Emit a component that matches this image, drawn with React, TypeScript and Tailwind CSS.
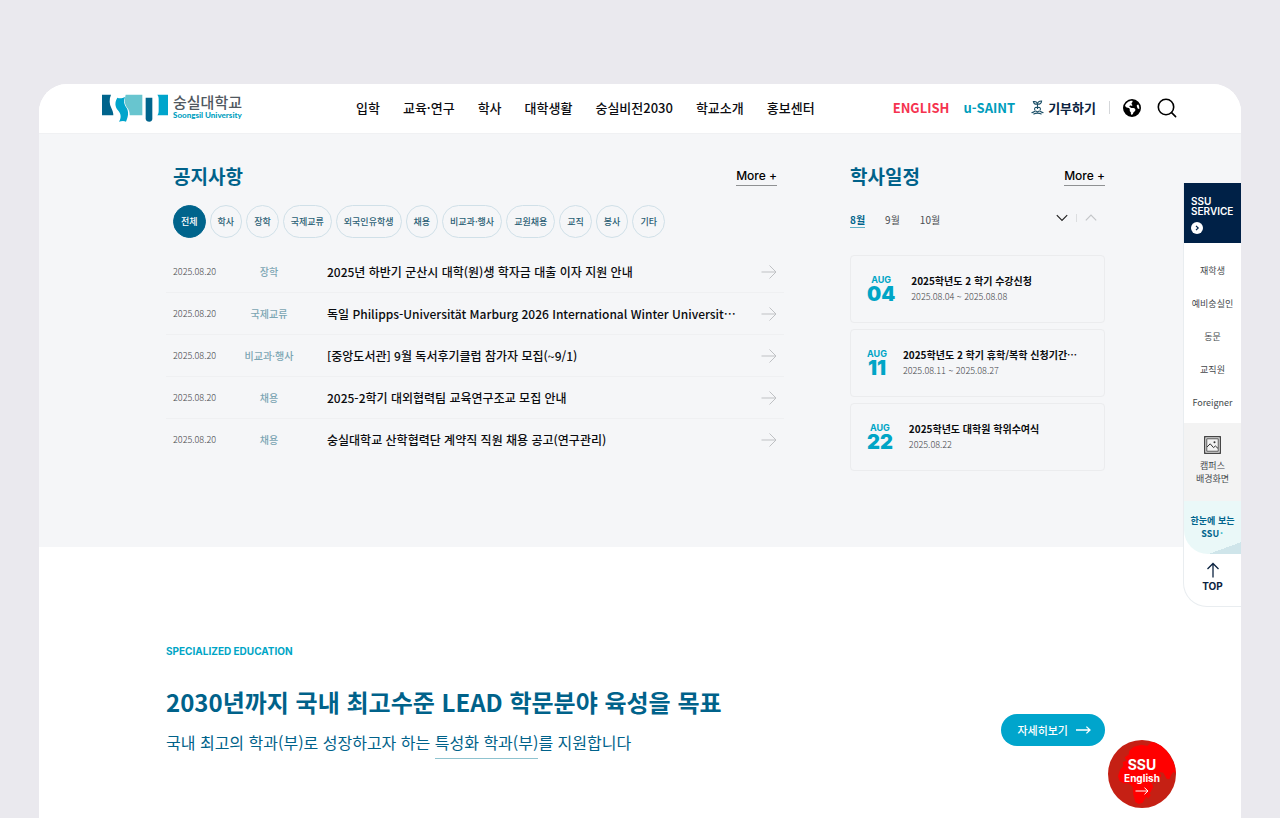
import { useState } from "react";
import { FaEarthAmericas } from "react-icons/fa6";

const NAV = ["입학", "교육·연구", "학사", "대학생활", "숭실비전2030", "학교소개", "홍보센터"];

const CATEGORIES = ["전체", "학사", "장학", "국제교류", "외국인유학생", "채용", "비교과·행사", "교원채용", "교직", "봉사", "기타"];

const NOTICES = [
  { date: "2025.08.20", category: "장학", title: "2025년 하반기 군산시 대학(원)생 학자금 대출 이자 지원 안내" },
  { date: "2025.08.20", category: "국제교류", title: "독일 Philipps-Universität Marburg 2026 International Winter Universit…" },
  { date: "2025.08.20", category: "비교과·행사", title: "[중앙도서관] 9월 독서후기클럽 참가자 모집(~9/1)" },
  { date: "2025.08.20", category: "채용", title: "2025-2학기 대외협력팀 교육연구조교 모집 안내" },
  { date: "2025.08.20", category: "채용", title: "숭실대학교 산학협력단 계약직 직원 채용 공고(연구관리)" },
];

const EVENTS = [
  { month: "AUG", day: "04", title: "2025학년도 2 학기 수강신청", period: "2025.08.04 ~ 2025.08.08" },
  { month: "AUG", day: "11", title: "2025학년도 2 학기 휴학/복학 신청기간…", period: "2025.08.11 ~ 2025.08.27" },
  { month: "AUG", day: "22", title: "2025학년도 대학원 학위수여식", period: "2025.08.22" },
];

const MONTHS = ["8월", "9월", "10월"];

const SERVICES = ["재학생", "예비숭실인", "동문", "교직원", "Foreigner"];

function Arrow({ className }: { className: string }) {
  return (
    <svg viewBox="0 0 16 16" fill="none" stroke="currentColor" className={className} aria-hidden="true">
      <path d="M0.5 8H15M8.5 1.5L15 8L8.5 14.5" />
    </svg>
  );
}

function Logo() {
  return (
    <a href="#" className="flex shrink-0 items-start gap-[5px]">
      <svg viewBox="0 0 198 84" className="h-[28px] w-[66px]" aria-hidden="true">
        <path d="M0 2H27C21 16 22 30 28 42C32 50 34 56 34 64H0Z" fill="#00648c" />
        <path d="M46 11C54 15 62 12 69 9C64 22 66 32 74 42C80 52 80 66 72 83C66 80 58 81 51 83C59 70 57 60 49 50C38 38 38 24 46 11Z" fill="#00a5cc" />
        <path d="M71 2H121V64H83C83 54 81 48 76 42C67 30 67 18 71 2Z" fill="#68c5cf" />
        <path d="M131 11H151V74C151 80 147 83 142 83C136 83 131 79 131 74Z" fill="#00648c" />
        <path d="M166 2H198V64H166C169 60 170 56 170 50V16C170 10 169 6 166 2Z" fill="#00a5cc" />
      </svg>
      <span className="flex w-[70px] flex-col whitespace-nowrap">
        <span className="text-[15px] leading-4 font-medium text-[#505860]">숭실대학교</span>
        <span className="font-['Lato',sans-serif] text-[8px] leading-[10px] font-black text-[#00a0c0]">Soongsil University</span>
      </span>
    </a>
  );
}

function Header() {
  return (
    <header className="flex h-[50px] items-center border-b border-[#f0f1f3] bg-white pr-16 pb-0.5 pl-[63px] text-[13px] leading-5">
      <Logo />
      <nav className="ml-[113px] flex gap-[23px] font-medium text-[#0c0c10]">
        {NAV.map((item) => (
          <a key={item} href="#" className="whitespace-nowrap">{item}</a>
        ))}
      </nav>
      <div className="ml-auto flex items-center font-bold">
        <a href="#" className="text-[#f5334f]">ENGLISH</a>
        <a href="#" className="ml-[14px] whitespace-nowrap text-[#009dbc]">u-SAINT</a>
        <a href="#" className="ml-4 flex items-center gap-1 whitespace-nowrap text-[#0b2340]">
          <svg viewBox="0 0 14 16" fill="none" stroke="#1d5068" strokeWidth="1.2" strokeLinecap="round" className="h-[15px] w-[13px]" aria-hidden="true">
            <path d="M7 9V4.5M7 4.5C4.5 4.8 3 3.5 2.6 1.6C5 1.2 6.6 2.2 7 4.5ZM7 4.5C7.2 2 8.8 0.9 11.4 1C11.4 3.4 9.6 4.7 7 4.5Z" />
            <path d="M4 10.5C3.4 8.4 4.8 7.2 7 8.2C9.2 7.2 10.6 8.4 10 10.5" />
            <path d="M1 13.5C3 13.5 3.6 11.4 5.2 11.8L7 12.8L8.8 11.8C10.4 11.4 11 13.5 13 13.5M3 15C5 13.8 9 13.8 11 15" />
          </svg>
          기부하기
        </a>
        <span className="ml-[13px] h-[13px] w-px bg-[#d5d7da]" />
        <button type="button" aria-label="Language" className="ml-[13px] text-black">
          <FaEarthAmericas className="size-[18px]" />
        </button>
        <button type="button" aria-label="검색" className="ml-4 text-black">
          <svg viewBox="0 0 20 20" fill="none" stroke="currentColor" strokeWidth="1.6" strokeLinecap="round" className="size-5" aria-hidden="true">
            <circle cx="9" cy="9" r="7.7" />
            <path d="M14.6 14.6L18.6 18.6" />
          </svg>
        </button>
      </div>
    </header>
  );
}

function SectionTitle({ title }: { title: string }) {
  return (
    <div className="flex h-6 items-center justify-between">
      <h2 className="text-[19px] leading-6 font-bold text-[#00628a]">{title}</h2>
      <a href="#" className="border-b border-[#8f9193] font-['Inter',sans-serif] text-[12px] leading-[18px] font-medium text-black">
        More +
      </a>
    </div>
  );
}

function Notices() {
  const [active, setActive] = useState("전체");

  return (
    <section className="min-w-0 max-w-[604px] flex-1">
      <SectionTitle title="공지사항" />
      <div className="mt-[17px] flex gap-1">
        {CATEGORIES.map((category) => (
          <button
            key={category}
            type="button"
            onClick={() => setActive(category)}
            className={`h-[33px] rounded-full border px-[7px] text-[9px] leading-4 font-medium whitespace-nowrap ${
              active === category ? "border-[#00648c] bg-[#00648c] text-white" : "border-[#d0e0e8] text-[#2b5f75]"
            }`}
          >
            {category}
          </button>
        ))}
      </div>
      <ul className="-mx-[7px] mt-[13px]">
        {NOTICES.map((notice) => (
          <li key={notice.title} className="border-b border-[#eff0f2] last:border-b-0">
            <a href="#" className="flex h-[41px] items-center px-[7px]">
              <span className="w-[60px] text-[9px] leading-4 font-light text-[#3f4347]">{notice.date}</span>
              <span className="w-[72px] text-center text-[10px] leading-4 font-medium text-[#7ba5b3]">{notice.category}</span>
              <span className="ml-[22px] min-w-0 flex-1 truncate text-[12px] leading-5 font-medium text-[#0a0b0e]">{notice.title}</span>
              <Arrow className="size-4 shrink-0 text-[#bfc1c4]" />
            </a>
          </li>
        ))}
      </ul>
    </section>
  );
}

function Schedule() {
  const [month, setMonth] = useState("8월");

  return (
    <section className="w-[255px] shrink-0">
      <SectionTitle title="학사일정" />
      <div className="mt-[22px] flex h-5 items-center justify-between">
        <div className="flex gap-5 text-[10px] leading-[15px]">
          {MONTHS.map((item) => (
            <button
              key={item}
              type="button"
              onClick={() => setMonth(item)}
              className={`border-b ${
                month === item ? "border-[#5fb0c8] font-bold text-[#00648c]" : "border-transparent text-[#4a4d50]"
              }`}
            >
              {item}
            </button>
          ))}
        </div>
        <div className="flex items-center gap-2 pr-2 pb-1">
          <button type="button" aria-label="다음 일정" className="text-[#222]">
            <svg viewBox="0 0 12 12" fill="none" stroke="currentColor" strokeWidth="1.2" className="size-3" aria-hidden="true">
              <path d="M0.8 3.2L6 8.4L11.2 3.2" />
            </svg>
          </button>
          <span className="h-2 w-px bg-[#dcdee0]" />
          <button type="button" aria-label="이전 일정" className="text-[#c3c5c8]">
            <svg viewBox="0 0 12 12" fill="none" stroke="currentColor" strokeWidth="1.2" className="size-3" aria-hidden="true">
              <path d="M0.8 8.4L6 3.2L11.2 8.4" />
            </svg>
          </button>
        </div>
      </div>
      <ul className="mt-[25px] flex flex-col gap-[6px]">
        {EVENTS.map((event) => (
          <li key={event.day}>
            <a href="#" className="flex h-[68px] items-center gap-4 rounded-[4px] border border-[#ebecee] px-4">
              <span className="flex flex-col items-center font-['Inter',sans-serif] text-[#00a5c6]">
                <span className="text-[9px] leading-[11px] font-bold">{event.month}</span>
                <span className="text-[20px] leading-[19px] font-black">{event.day}</span>
              </span>
              <span className="flex min-w-0 flex-col">
                <span className="truncate text-[10px] leading-4 font-bold text-[#0a0b0e]">{event.title}</span>
                <span className="text-[9px] leading-4 font-light text-[#3f4347]">{event.period}</span>
              </span>
            </a>
          </li>
        ))}
      </ul>
    </section>
  );
}

function QuickMenu() {
  return (
    <aside className="absolute top-[99px] right-0 w-[58px] overflow-hidden rounded-bl-[24px] border-b border-l border-[#e9edf0] bg-white text-[9px] text-[#44484c]">
      <a href="#" className="flex h-[60px] flex-col items-start bg-[#002147] pt-[13px] pl-[7px] font-['Inter',sans-serif] text-[10px] leading-[10px] font-semibold text-white">
        SSU
        <br />
        SERVICE
        <svg viewBox="0 0 12 12" className="mt-[6px] size-3" aria-hidden="true">
          <circle cx="6" cy="6" r="6" fill="#fff" />
          <path d="M5 3.8L7.2 6L5 8.2" fill="none" stroke="#002147" strokeWidth="1.2" />
        </svg>
      </a>
      <ul className="flex flex-col pt-[11px] pb-1 text-center">
        {SERVICES.map((service) => (
          <li key={service}>
            <a href="#" className="block h-[33px] leading-[33px] whitespace-nowrap">{service}</a>
          </li>
        ))}
      </ul>
      <a href="#" className="flex h-[78px] flex-col items-center bg-[#f3f3f3] pt-[13px] text-center leading-[13px]">
        <svg viewBox="0 0 17 18" fill="none" stroke="#333" className="mb-[5px] h-[18px] w-[17px] shrink-0" aria-hidden="true">
          <rect x="0.7" y="0.7" width="15.6" height="16.6" strokeWidth="1.2" />
          <rect x="2.8" y="2.8" width="11.4" height="12.4" strokeWidth="0.8" />
          <path d="M3 11L6.2 7.8L9.5 11.6L11.4 10L14 12.4" />
          <circle cx="10.5" cy="6.3" r="1" fill="#333" stroke="none" />
        </svg>
        캠퍼스
        <br />
        배경화면
      </a>
      <a href="#" className="block h-[53px] overflow-hidden rounded-bl-[24px] bg-[linear-gradient(160deg,#eaf8f8_84%,#cfe5ea_84%)] pt-[13px] text-center leading-[13px] font-bold text-[#00648c]">
        한눈에 보는
        <br />
        SSU<span className="text-[#26b3c4]">˙</span>
      </a>
      <button type="button" className="flex h-[52px] w-full flex-col items-center pt-2 font-['Inter',sans-serif] text-[10px] leading-3 font-bold text-[#0b2340]">
        <svg viewBox="0 0 16 16" fill="none" stroke="currentColor" strokeWidth="1.3" className="mb-[2px] size-4" aria-hidden="true">
          <path d="M8 15.5V1.5M2.5 7L8 1.5L13.5 7" />
        </svg>
        TOP
      </button>
    </aside>
  );
}

function EnglishBadge() {
  return (
    <a
      href="#"
      className="absolute top-[656px] right-[65px] flex size-[68px] flex-col items-center overflow-hidden rounded-full bg-[#c52014] pt-[17px] font-['Inter',sans-serif] font-bold text-white"
    >
      <svg viewBox="0 0 204 204" fill="#ff0000" className="absolute inset-0 size-full" aria-hidden="true">
        <path d="M64 32L78 20L100 14L118 18L130 6L150 8L180 36L200 74L204 100L196 96L190 104L184 118L176 116L166 98L154 96L160 108L148 122L138 130L128 118L122 104L130 128L136 140L128 156L112 174L104 188L92 192L82 186L76 164L74 140L62 130L46 130L34 122L30 108L36 90L46 78L44 66L56 62L50 52L62 44Z" />
        <path d="M124 158L128 166L120 176L116 170Z" />
        <path d="M60 66L78 62L88 70L104 64L112 76L96 80L74 76Z" fill="#c52014" />
      </svg>
      <span className="relative text-[14px] leading-4">SSU</span>
      <span className="relative text-[10px] leading-[11px]">English</span>
      <svg viewBox="0 0 14 8" fill="none" stroke="currentColor" className="relative mt-[3px] h-2 w-[14px]" aria-hidden="true">
        <path d="M0.5 4H13M9.5 0.7L13 4L9.5 7.3" />
      </svg>
    </a>
  );
}

export default function App() {
  return (
    <div lang="ko" className="flex min-h-screen flex-col bg-[#eae9ee] px-[39px] pt-[84px] font-['Noto_Sans_CJK_KR',sans-serif]">
      <div className="relative flex flex-1 flex-col">
        <div className="flex flex-1 flex-col overflow-hidden rounded-t-[28px] bg-white">
          <Header />
          <main className="flex flex-1 flex-col">
            <div className="flex min-h-[413px] justify-between gap-10 bg-[#f5f6f8] pt-[30px] pr-[136px] pb-[76px] pl-[134px]">
              <Notices />
              <Schedule />
            </div>
            <section className="flex flex-1 items-start justify-between pt-[96px] pr-[136px] pb-10 pl-[127px] text-[#00628a]">
              <div>
                <p className="font-['Inter',sans-serif] text-[10px] leading-4 font-bold text-[#00a5c6]">SPECIALIZED EDUCATION</p>
                <h2 className="mt-[27px] text-[24px] leading-8 font-bold">2030년까지 국내 최고수준 LEAD 학문분야 육성을 목표</h2>
                <p className="mt-3 text-[16px] leading-6">
                  국내 최고의 학과(부)로 성장하고자 하는 <span className="border-b border-[#8fc3cf] pb-1">특성화 학과(부)</span>를 지원합니다
                </p>
              </div>
              <a href="#" className="mt-[71px] flex h-8 items-center gap-2 rounded-full bg-[#00a5cc] pr-[14px] pl-4 text-[11px] leading-4 font-medium whitespace-nowrap text-white">
                자세히보기
                <svg viewBox="0 0 15 8" fill="none" stroke="currentColor" strokeWidth="1.3" className="h-2 w-[15px]" aria-hidden="true">
                  <path d="M0 4H14M10.4 0.6L14 4L10.4 7.4" />
                </svg>
              </a>
            </section>
          </main>
        </div>
        <QuickMenu />
        <EnglishBadge />
      </div>
    </div>
  );
}
